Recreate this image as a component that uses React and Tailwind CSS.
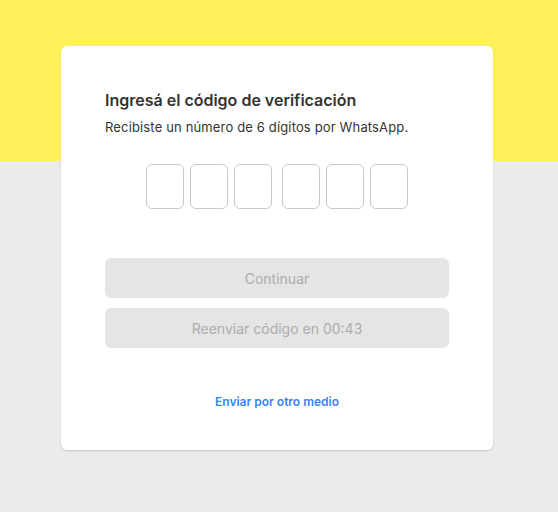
export default function App() {
  const digits = [0, 1, 2]
  return (
    <div className="relative min-h-[512px] w-full bg-[#ebebeb] font-['Inter',sans-serif]">
      <div className="h-[161px] w-full bg-[#fff159]" />
      <div className="absolute left-[61px] top-[46px] w-[432px] h-[404px] rounded-md bg-white shadow-[0_1px_2px_rgba(0,0,0,0.15)] px-[44px] pt-[43px]">
        <h1 className="text-[16px] leading-[22px] font-semibold text-[#333]">Ingresá el código de verificación</h1>
        <p className="mt-[7px] text-[13px] leading-[18px] tracking-[0.15px] text-[#333]">Recibiste un número de 6 dígitos por WhatsApp.</p>

        <div className="mt-[28px] flex justify-center gap-[10px]">
          {[0, 1].map((g) => (
            <div key={g} className="flex gap-[6px]">
              {digits.map((d) => (
                <input
                  key={d}
                  className="h-[45px] w-[38px] rounded-md border border-[#c8c8c8] bg-white text-center outline-none"
                />
              ))}
            </div>
          ))}
        </div>

        <div className="mt-[49px] flex flex-col gap-[10px]">
          <button className="h-[40px] w-full rounded-md bg-[#e5e5e5] text-[14px] text-[#acacac]">Continuar</button>
          <button className="h-[40px] w-full rounded-md bg-[#e5e5e5] text-[14px] text-[#acacac]">Reenviar código en 00:43</button>
        </div>

        <div className="mt-[40px] text-center">
          <a className="text-[12px] font-semibold text-[#3483fa]">Enviar por otro medio</a>
        </div>
      </div>
    </div>
  )
}
